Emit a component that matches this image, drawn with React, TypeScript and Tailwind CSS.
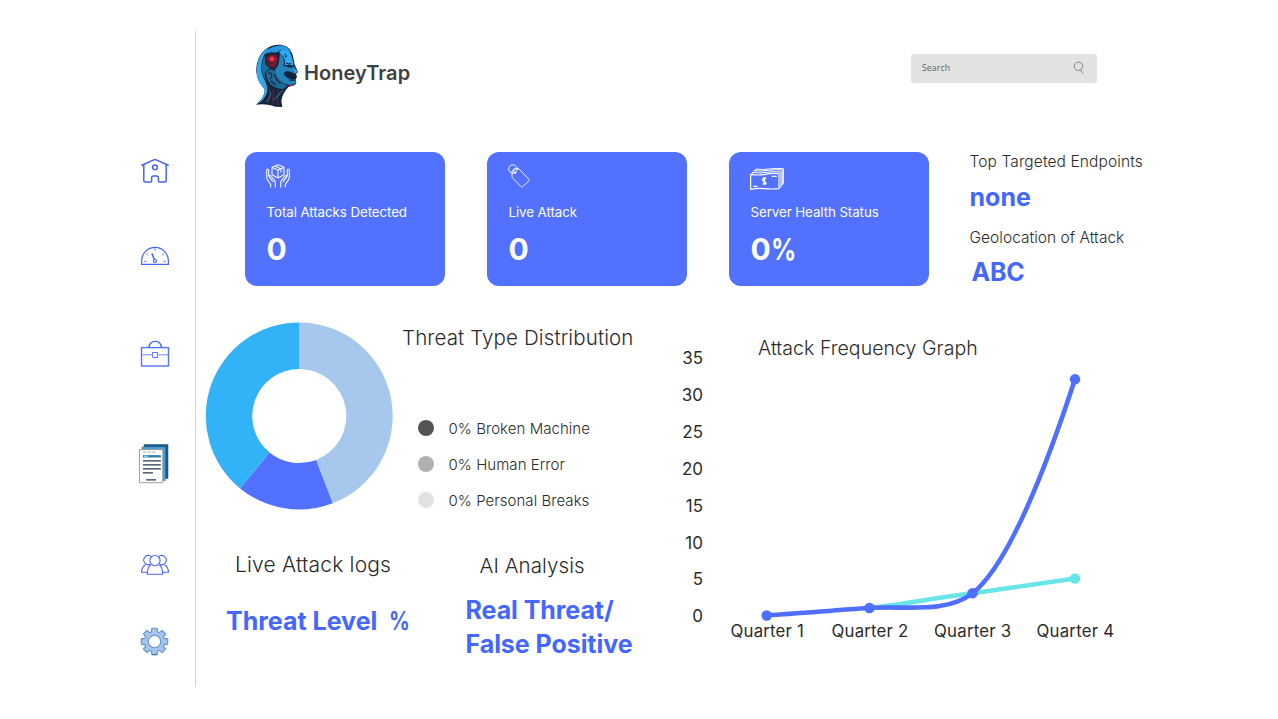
import type { ReactNode } from "react";

function HomeIcon() {
  return (
    <svg width="30" height="30" viewBox="0 0 30 30" fill="none" stroke="#4463fb" strokeWidth="1.5" strokeLinejoin="round" strokeLinecap="round">
      <path d="M1.800 10.200 15 4.400l13.200 5.800" />
      <path d="M3.800 9.600v16.200q0 1.200 1.200 1.200h5.600q1 0 1-1v-3.200q0-1.900 1.800-1.900h3.200q1.800 0 1.800 1.900V26q0 1 1 1h5.600q1.200 0 1.200-1.200V9.600" />
      <circle cx="15" cy="12.300" r="2.400" />
    </svg>
  );
}

function GaugeIcon() {
  return (
    <svg width="30" height="20" viewBox="0 0 30 20" fill="none" stroke="#4463fb" strokeWidth="1.200">
      <path d="M1.600 18.300v-3.500a13.400 13.400 0 0 1 26.800 0v3.500z" />
      <path d="M4 15.300h2.700M23.300 15.300H26M6.200 7.500l2 1.900M23.800 7.500l-2 1.900M15 2v2.800" strokeWidth="0.800" />
      <circle cx="15" cy="15" r="1.500" />
      <path d="M14.300 13.400 11.800 7.400" strokeWidth="1.500" />
    </svg>
  );
}

function BriefcaseIcon() {
  return (
    <svg width="30" height="28" viewBox="0 0 30 28" fill="none" stroke="#5671fb" strokeWidth="1.200">
      <rect x="1.500" y="7.600" width="27" height="18.400" strokeWidth="1.400" />
      <path d="M8.800 7.600C9.300 3.700 12 1.400 15.200 1.400s5.900 2.300 6.400 6.200" stroke="#4463fb" strokeWidth="1.400" />
      <path d="M1.500 14.800h11M17.700 14.800h10.800" strokeWidth="0.800" />
      <rect x="12.600" y="12.500" width="5" height="5" strokeWidth="0.900" />
    </svg>
  );
}

function DocumentsIcon() {
  return (
    <svg width="30" height="40" viewBox="0 0 30 40" className="-ml-px">
      <path d="M5 .5h24v34H5z" fill="#0d5a94" stroke="#4a5a66" strokeWidth="0.600" />
      <path d="M3 3h23.300v33.500H3z" fill="#4ea4d3" stroke="#47789a" strokeWidth="0.600" />
      <path d="M.500 5.500h23.300v33.200H.500z" fill="#fff" stroke="#888" strokeWidth="0.800" />
      <path d="M4 8h3.500M8.800 8h3M13.300 8h3" stroke="#c3c3c3" strokeWidth="1.500" />
      <path d="M3.900 12.300h18" stroke="#2e86ad" strokeWidth="2.400" />
      <path d="M5 12.300h3.600" stroke="#a9d3e5" strokeWidth="1.200" />
      <path d="M3.900 16.800h18M3.900 20.800h18M3.900 24.800h18M3.900 28.800h10M7.200 35.800h9.800" stroke="#24384e" strokeWidth="1.300" />
    </svg>
  );
}

function UsersIcon() {
  return (
    <svg width="30" height="22" viewBox="0 0 30 22" fill="none" stroke="#4f68fb" strokeWidth="1.100">
      <path d="M10.300 10.300a4.600 4.600 0 1 1 1.200-7.600M19.700 10.300a4.600 4.600 0 1 0-1.200-7.600" />
      <path d="M5.500 10.700c-2.700 1.500-3.900 4-4 7.600h6.300M24.500 10.700c2.700 1.500 3.900 4 4 7.600h-6.300" />
      <circle cx="15" cy="6.600" r="5.100" />
      <path d="M10.800 10.800c-2.300 1.600-3.400 4.500-3.500 9.500h15.400c-.100-5-1.200-7.900-3.500-9.500" />
    </svg>
  );
}

function GearIcon() {
  return (
    <svg width="30" height="30" viewBox="-14.500 -15.500 30 30">
      <g fill="#a4c6ea" stroke="#5f92cc" strokeWidth="1.100" strokeLinejoin="round">
        <path d="M-2.600-13.200H2.600L3.100-9.600 4.700-8.900 7.600-11.100 11.100-7.600 8.900-4.700 9.600-3.100 13.200-2.600V2.600L9.600 3.100 8.900 4.700 11.100 7.600 7.600 11.100 4.700 8.900 3.100 9.600 2.600 13.200H-2.600L-3.100 9.600-4.700 8.900-7.600 11.100-11.100 7.600-8.900 4.700-9.600 3.100-13.200 2.600V-2.600L-9.600-3.100-8.900-4.700-11.100-7.600-7.600-11.100-4.700-8.900-3.100-9.600Z" />
        <circle r="6.200" fill="#fff" />
      </g>
      <path d="M-2.600 13.100h5.200" stroke="#2d78c4" strokeWidth="1.100" />
    </svg>
  );
}

function HeadLogo() {
  return (
    <svg width="54" height="70" viewBox="0 0 162 210">
      <path d="M18 194C34 181 45 166 44 148 34 136 22 122 19 96 17 60 36 26 66 17 92 10 116 17 124 36 132 50 131 66 135 76L144 96 138 102 141 111 137 118 139 129C137 137 126 137 116 140 105 151 97 164 94 182L97 201 76 200C62 194 38 190 18 194Z" fill="#16263a" />
      <path d="M21 104C17 66 32 34 60 20 45 36 35 54 33 84 33 104 48 124 52 142 54 164 39 184 22 192 40 174 46 160 43 146 33 133 24 124 21 104Z" fill="#32a8ec" />
      <path d="M38 46C50 24 76 14 99 17 112 20 120 27 123 38L106 36 90 31 78 38C64 34 50 38 38 46Z" fill="#2398df" />
      <path d="M86 36C98 27 116 30 122 42 128 54 128 65 131 76L118 74 104 76C108 58 100 46 86 36Z" fill="#30aaf0" />
      <path d="M90 40C102 52 104 64 100 78L116 80 133 80 143 96 135 101 123 96 110 93 101 99 107 110 122 118 137 120 138 130 124 135 108 133 90 122C79 110 74 98 76 86 90 76 87 59 90 40Z" fill="#2583bc" />
      <path d="M49 53C56 39 74 39 82 49 88 63 82 79 68 86 57 80 45 70 49 53Z" fill="#5c1b30" />
      <path d="M53 60C60 47 75 48 80 58 77 67 71 76 62 76" fill="none" stroke="#a91f39" strokeWidth="3" />
      <circle cx="66" cy="57" r="8" fill="#d8233f" />
      <circle cx="66" cy="57" r="4" fill="#f94450" />
      <path d="M36 78C37 63 40 53 45 48L46 72 60 86 50 92C41 97 44 114 52 124 43 118 34 98 36 78Z" fill="#1b6b9b" />
      <path d="M49 96 62 88 76 94 82 112 93 125 112 138 98 148 78 143 62 134 51 116Z" fill="#216b99" />
      <path d="M55 100C68 95 68 110 59 118M73 103 80 119 92 131M62 123 78 135" fill="none" stroke="#112337" strokeWidth="3.500" />
      <path d="M108 69Q115 73 123 71M111 80 126 82M124 109 137 111M116 120 136 121" fill="none" stroke="#0f2235" strokeWidth="3" />
      <path d="M106 40V52L112 47" fill="none" stroke="#13456d" strokeWidth="3" />
      <path d="M56 142C63 154 61 173 46 187M70 148C72 162 63 176 72 193M84 152C86 165 78 178 86 194" fill="none" stroke="#6d1c34" strokeWidth="3.500" />
      <path d="M99 151C89 159 83 173 69 180M62 156C63 168 57 178 51 186" fill="none" stroke="#23688f" strokeWidth="3.500" />
      <path d="M112 137 126 134 136 133 128 138 117 140Z" fill="#9e2d43" />
      <path d="M131 86 143 96 136 99Z" fill="#45b5f3" />
    </svg>
  );
}

function HandsBoxIcon() {
  return (
    <svg width="24" height="24" viewBox="0 0 72 72" fill="none" stroke="#f0f2ff" strokeWidth="3.500" strokeLinejoin="round" strokeLinecap="round" className="-ml-[0.700px]">
      <path d="M36 2 54 10V32L36 42 18 32V10ZM18 10 36 19 54 10M36 19V42M27 6 45 15V23" />
      <path d="M14 69V61L4 47Q2 42 2 36V19Q2 15 5 15T8 19V36L17 47M28 69V57Q28 52 24 47L15 36Q11 33 10 37T14 44L21 53" />
      <path d="M58 69V61L68 47Q70 42 70 36V19Q70 15 67 15T64 19V36L55 47M44 69V57Q44 52 48 47L57 36Q61 33 62 37T58 44L51 53" />
    </svg>
  );
}

function TagIcon() {
  return (
    <svg width="24" height="24" viewBox="0 0 72 72" fill="none" stroke="#f0f2ff" strokeWidth="3" strokeLinejoin="round" className="-ml-[0.500px]">
      <path d="M12 23 17 15 31 13 63 46Q65 49 62 51L44 68Q41 70 38 67L12 40Z" />
      <circle cx="14.500" cy="15" r="12.500" />
      <circle cx="21" cy="26" r="3" />
      <path d="M14 28Q13 17 23 15T31 17" />
    </svg>
  );
}

function CashIcon() {
  return (
    <svg width="34" height="26" viewBox="0 -5 102 78" fill="none" stroke="#fff" strokeWidth="3.600" strokeLinejoin="round" className="-ml-[0.500px]">
      <path d="M2 26Q25 30 45 26T87 24V69Q62 71 43 69T2 71Z" />
      <path d="M7 25V20Q28 24 50 20T93 19V64H88M12 18V15Q33 18 55 14T97 13V58H94M17 13V10Q36 13 58 10T100 9V54H98" strokeWidth="3" />
      <path d="M9 62H23M65 32H80" strokeWidth="3.600" />
      <path d="M48 40Q45 36 41 37T38 43Q38 46 42 47T48 53Q46 58 38 54M43 34V58" strokeWidth="3.800" />
    </svg>
  );
}

function StatCard({ icon, label, children }: { icon: ReactNode; label: string; children: ReactNode }) {
  return (
    <section className="flex h-[134px] w-[200.500px] flex-col rounded-[12px] bg-[#5271ff] pl-[22px] pt-[12px] text-white">
      <div className="h-[38px]">{icon}</div>
      <h2 className="text-[13.330px] leading-[20px] tracking-[-0.080px]">{label}</h2>
      <p className="mt-[7px] text-[30px] font-bold leading-[40px]">{children}</p>
    </section>
  );
}

function Donut() {
  return (
    <svg width="190" height="190" viewBox="-95.300 -95 190 190">
      <path d="M0-93.500A93.500 93.500 0 0 1 33.400 87.300L16.800 43.900A47 47 0 0 0 0-47Z" fill="#a6c8ec" />
      <path d="M33.400 87.300A93.500 93.500 0 0 1-59.200 72.400L-29.800 36.400A47 47 0 0 0 16.800 43.900Z" fill="#5271ff" />
      <path d="M-59.200 72.400A93.500 93.500 0 0 1 0-93.500V-47A47 47 0 0 0-29.800 36.400Z" fill="#32b2f7" />
    </svg>
  );
}

const legend = [
  { label: "0% Broken Machine", dot: "bg-[#545454]" },
  { label: "0% Human Error", dot: "bg-[#b0b0b0]" },
  { label: "0% Personal Breaks", dot: "bg-[#e2e2e2]" },
];

const ticks = [35, 30, 25, 20, 15, 10, 5, 0];
const quarters = [1, 2, 3, 4];

function FrequencyChart() {
  return (
    <svg width="460" height="300" viewBox="670 345 460 300" className="font-['Inter',sans-serif]" fill="#2b2b2b" fontSize="17">
      {ticks.map((t, i) => (
        <text key={t} x="703" y={363.9 + i * 36.93} textAnchor="end">{t}</text>
      ))}
      {quarters.map((q, i) => (
        <text key={q} x={767.3 + i * 102.7} y="636.600" textAnchor="middle" fontSize="16.800" letterSpacing="0.220">{`Quarter ${q}`}</text>
      ))}
      <g fill="none" strokeWidth="4.600" strokeLinecap="round">
        <path d="M869.500 608C904 604 938 597.500 972.500 593.300L1075 578.500" stroke="#68e5e8" />
        <path d="M766.700 615.300C801 613.500 835 610 869.500 608 904 605.500 946 614 972.500 593.300 1005 568 1042 480 1075 379.300" stroke="#4e6fff" />
      </g>
      <circle cx="1075" cy="578.500" r="5.200" fill="#68e5e8" />
      <g fill="#4e6fff">
        <circle cx="766.700" cy="615.500" r="5.200" />
        <circle cx="869.500" cy="608" r="5.200" />
        <circle cx="972.500" cy="593.300" r="5.200" />
        <circle cx="1075" cy="379.300" r="5.200" />
      </g>
    </svg>
  );
}

export default function App() {
  return (
    <div className="flex h-[719px] w-[1278px] overflow-hidden bg-white font-['Inter',sans-serif] text-[#2b2b2b]">
      <aside className="mr-px mt-[31px] flex h-[656px] w-[196px] flex-col border-r border-[#d2d2d2] pl-[140px] pt-[124px]">
        <HomeIcon />
        <div className="mt-[61px]"><GaugeIcon /></div>
        <div className="mt-[74px]"><BriefcaseIcon /></div>
        <div className="mt-[76px]"><DocumentsIcon /></div>
        <div className="mt-[70px]"><UsersIcon /></div>
        <div className="mt-[50px]"><GearIcon /></div>
      </aside>

      <main className="flex w-[1081px] flex-col">
        <header className="flex h-[152px] pl-[53px] pt-[40px]">
          <HeadLogo />
          <h1 className="mt-[18px] w-[607px] text-[20px] font-semibold leading-[30px] tracking-[0.060px] text-[#404040]">HoneyTrap</h1>
          <div className="mt-[13.500px] flex h-[29px] w-[186px] items-center justify-between rounded-[3px] bg-[#e2e2e2] pl-[11px] pr-[12px]">
            <span className="font-['Open_Sans',sans-serif] text-[8.600px] tracking-[0.150px] text-[#666]">Search</span>
            <svg width="12" height="14" viewBox="0 0 12 14" fill="none" stroke="#777" strokeWidth="0.900">
              <circle cx="5.500" cy="5.300" r="4.200" />
              <path d="m7.700 8.900 2.400 3.800" />
            </svg>
          </div>
        </header>

        <div className="flex h-[170px] pl-[47.500px]">
          <div className="flex gap-[41.500px]">
            <StatCard icon={<HandsBoxIcon />} label="Total Attacks Detected">0</StatCard>
            <StatCard icon={<TagIcon />} label="Live Attack">0</StatCard>
            <StatCard icon={<CashIcon />} label="Server Health Status">
              0<span className="inline-block origin-left scale-x-[0.830]">%</span>
            </StatCard>
          </div>
          <section className="ml-[40.500px] text-[15.500px] font-light">
            <h2 className="leading-[20px] tracking-[0.110px]">Top Targeted Endpoints</h2>
            <p className="mt-[9px] text-[25px] font-bold leading-[32px] text-[#4467ff]">none</p>
            <h2 className="mt-[15px] leading-[20px] tracking-[0.030px]">Geolocation of Attack</h2>
            <p className="ml-[2px] mt-[8px] text-[25px] font-bold leading-[32px] tracking-[-0.200px] text-[#4467ff]">ABC</p>
          </section>
        </div>

        <div className="flex">
          <div className="w-[473px]">
            <section className="flex h-[229px] pl-[7px]">
              <div className="-mt-[1px]"><Donut /></div>
              <div className="ml-[8px] pt-[1px] font-light">
                <h2 className="text-[20.500px] leading-[30px] tracking-[0.120px]">Threat Type Distribution</h2>
                <ul className="ml-[16px] mt-[58px] text-[15px] leading-[36px] tracking-[0.050px]">
                  {legend.map((l) => (
                    <li key={l.label} className="flex h-[36px] items-center">
                      <span className={`-mt-[2px] mr-[14.500px] size-[16px] rounded-full ${l.dot}`} />
                      {l.label}
                    </li>
                  ))}
                </ul>
              </div>
            </section>
            <div className="flex pl-[29px]">
              <section className="w-[239.500px]">
                <h2 className="ml-[9px] text-[21px] font-light leading-[28px] tracking-[0.180px]">Live Attack logs</h2>
                <p className="mt-[25px] flex text-[25px] font-bold leading-[34px] text-[#4467ff]">
                  Threat Level<span className="ml-[12px] origin-left scale-x-[0.820] font-bold">%</span>
                </p>
              </section>
              <section>
                <h2 className="ml-[14px] mt-px text-[20.500px] font-light leading-[28px] tracking-[0.080px]">AI Analysis</h2>
                <p className="mt-[13px] text-[25px] font-bold leading-[34.400px] tracking-[-0.060px] text-[#4467ff]">Real Threat/<br />False Positive</p>
              </section>
            </div>
          </div>
          <section className="pt-[12px]">
            <h2 className="ml-[88px] h-[11px] text-[19.500px] font-light leading-[29px] tracking-[0.050px]">Attack Frequency Graph</h2>
            <FrequencyChart />
          </section>
        </div>
      </main>
    </div>
  );
}
